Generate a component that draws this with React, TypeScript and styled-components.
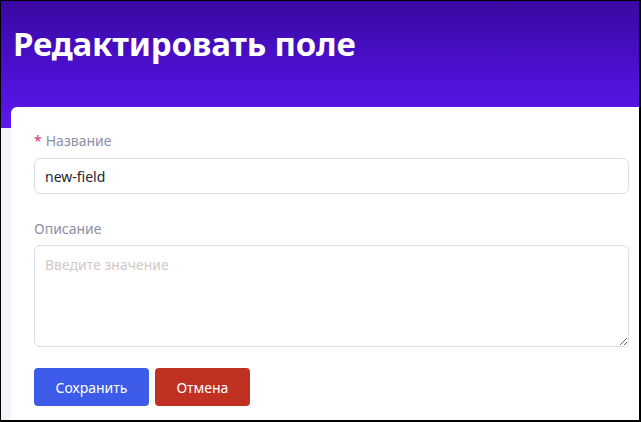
import styled, { createGlobalStyle } from 'styled-components';

const GlobalStyle = createGlobalStyle`
  html, body {
    margin: 0;
    padding: 0;
  }
  body {
    font-family: "Noto Sans", "Open Sans", sans-serif;
  }
`;

const Frame = styled.div`
  width: 641px;
  height: 422px;
  box-sizing: border-box;
  border-style: solid;
  border-color: #000;
  border-width: 1px 2px 2px 1px;
  background: #f4f4f8;
  overflow: hidden;
  display: flex;
  flex-direction: column;
`;

const Header = styled.header`
  height: 127px;
  flex-shrink: 0;
  box-sizing: border-box;
  padding: 20px 12px 0;
  background: linear-gradient(180deg, #3a08a2 0%, #4b10d0 55%, #5c18ef 100%);
`;

const Title = styled.h1`
  margin: 0;
  font-family: "Noto Sans", sans-serif;
  font-weight: 700;
  font-size: 33px;
  line-height: 46px;
  color: #fff;
  letter-spacing: -0.2px;
`;

const Card = styled.main`
  flex: 1;
  margin: -21px 0 0 10px;
  background: #fff;
  border-radius: 6px 0 0 0;
  padding: 24px 10px 0 23px;
  display: flex;
  flex-direction: column;
`;

const Field = styled.div<{ $gap?: number }>`
  display: flex;
  flex-direction: column;
  margin-bottom: ${(p) => p.$gap ?? 0}px;
`;

const Label = styled.label<{ $space: number }>`
  font-size: 14px;
  line-height: 20px;
  color: #8c90a6;
  margin-bottom: ${(p) => p.$space}px;
`;

const Required = styled.span`
  color: #d6336c;
  margin-right: 4px;
`;

const TextInput = styled.input`
  height: 36px;
  box-sizing: border-box;
  border: 1px solid #dcdde2;
  border-radius: 6px;
  padding: 0 10px;
  font-family: "Noto Sans", sans-serif;
  font-size: 14px;
  color: #1f1f2e;
  outline: none;
  background: #fff;
`;

const TextArea = styled.textarea`
  height: 102px;
  box-sizing: border-box;
  border: 1px solid #dcdde2;
  border-radius: 6px;
  padding: 9px 10px;
  font-family: "Noto Sans", sans-serif;
  font-size: 14px;
  color: #1f1f2e;
  outline: none;
  resize: vertical;

  &::placeholder {
    color: #d3c9c6;
  }
`;

const Actions = styled.div`
  display: flex;
  gap: 6px;
  margin-top: 21px;
`;

const Button = styled.button<{ $variant: 'primary' | 'danger' }>`
  height: 38px;
  padding: 0 21.5px;
  border: none;
  border-radius: 4px;
  font-family: "Noto Sans", sans-serif;
  font-size: 14px;
  color: #fff;
  cursor: pointer;
  background: ${(p) => (p.$variant === 'primary' ? '#3c5be8' : '#c03122')};
`;

export default function App() {
  return (
    <>
      <GlobalStyle />
      <Frame>
        <Header>
          <Title>Редактировать поле</Title>
        </Header>
        <Card>
          <Field $gap={25}>
            <Label $space={7}>
              <Required>*</Required>Название
            </Label>
            <TextInput defaultValue="new-field" />
          </Field>
          <Field>
            <Label $space={6}>Описание</Label>
            <TextArea placeholder="Введите значение" />
          </Field>
          <Actions>
            <Button $variant="primary">Сохранить</Button>
            <Button $variant="danger">Отмена</Button>
          </Actions>
        </Card>
      </Frame>
    </>
  );
}
